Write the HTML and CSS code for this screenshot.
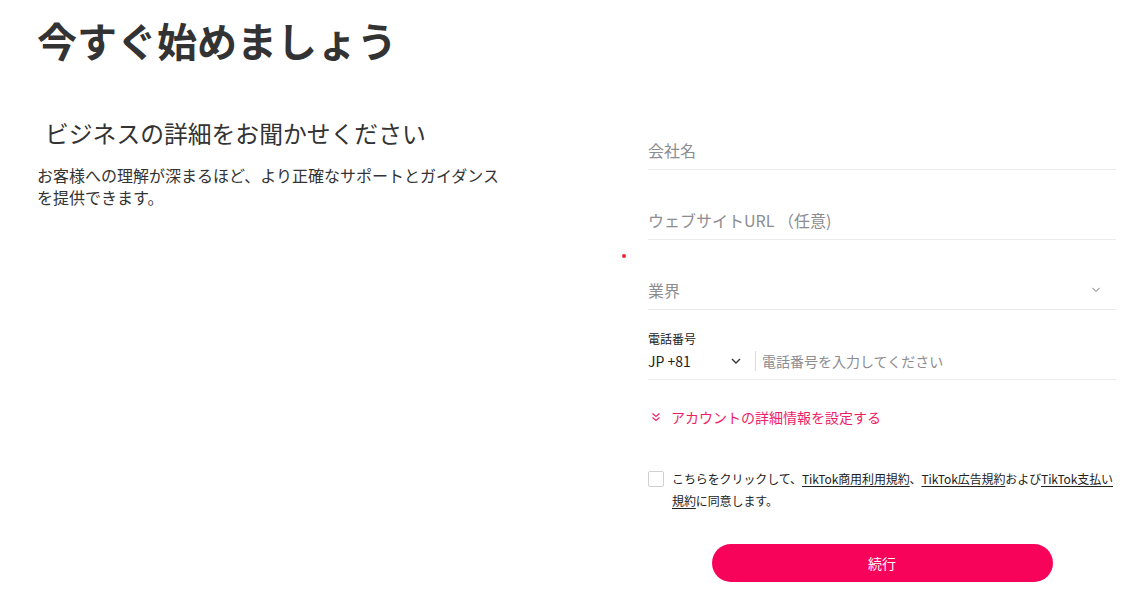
FILE: index.html
```html
<!DOCTYPE html>
<html lang="ja">
<head>
<meta charset="utf-8">
<title>今すぐ始めましょう</title>
<link rel="stylesheet" href="styles.css">
</head>
<body>
<div class="page">
  <h1 class="title">今すぐ始めましょう</h1>
  <div class="main">
    <section class="intro">
      <h2 class="intro-head">ビジネスの詳細をお聞かせください</h2>
      <p class="intro-text">お客様への理解が深まるほど、より正確なサポートとガイダンスを提供できます。</p>
    </section>
    <form class="form">
      <div class="field"><span class="placeholder">会社名</span></div>
      <div class="field"><span class="placeholder">ウェブサイトURL （任意)</span></div>
      <div class="field field-select">
        <span class="req-dot"></span>
        <span class="placeholder">業界</span>
        <svg class="sel-chev" width="10" height="6" viewBox="0 0 10 6"><path d="M1.5 1l3.5 3.5 3.5-3.5" fill="none" stroke="#a8a8ad" stroke-width="1.1"/></svg>
      </div>
      <div class="phone">
        <div class="phone-label">電話番号</div>
        <div class="phone-row">
          <div class="country">
            <span class="country-code">JP +81</span>
            <svg class="country-chev" width="10" height="6" viewBox="0 0 10 6"><path d="M1 1l4 4 4-4" fill="none" stroke="#333" stroke-width="1.4"/></svg>
          </div>
          <span class="phone-sep"></span>
          <span class="phone-ph">電話番号を入力してください</span>
        </div>
      </div>
      <div class="more">
        <svg class="more-icon" width="10" height="10" viewBox="0 0 10 10"><path d="M1.5 1.5l3.5 3 3.5-3M1.5 5.5l3.5 3 3.5-3" fill="none" stroke="#f0266b" stroke-width="1.3"/></svg>
        <span>アカウントの詳細情報を設定する</span>
      </div>
      <div class="agree">
        <span class="checkbox"></span>
        <p class="agree-text">こちらをクリックして、<a>TikTok商用利用規約</a>、<a>TikTok広告規約</a>および<a>TikTok支払い規約</a>に同意します。</p>
      </div>
      <div class="actions">
        <button type="button" class="btn">続行</button>
      </div>
    </form>
  </div>
</div>
</body>
</html>
```

FILE: styles.css
```css
* { box-sizing: border-box; }
html, body { margin: 0; padding: 0; background: #fff; }
body {
  font-family: "Noto Sans CJK JP", "Noto Sans", sans-serif;
  color: #333;
}
.page {
  padding: 0 28px 0 37px;
}
.title {
  margin: 12px 0 0;
  font-size: 40px;
  line-height: 56px;
  font-weight: 700;
  color: #333;
}
.main {
  display: flex;
  justify-content: space-between;
  margin-top: 48px;
}
.intro {
  width: 470px;
}
.intro-head {
  margin: 0;
  padding-left: 8px;
  font-size: 23.8px;
  line-height: 34px;
  font-weight: 400;
  color: #333;
}
.intro-text {
  margin: 14px 0 0;
  font-size: 16px;
  line-height: 22px;
  color: #333;
}
.form {
  width: 468px;
  padding-top: 14px;
  margin: 0;
}
.field {
  position: relative;
  display: flex;
  align-items: center;
  height: 40px;
  border-bottom: 1px solid #ebebeb;
  margin-bottom: 30px;
}
.placeholder {
  font-size: 16px;
  color: #8c8c91;
}
.field-select { margin-bottom: 20px; }
.sel-chev {
  margin-left: auto;
  margin-right: 15px;
}
.req-dot {
  position: absolute;
  left: -26px;
  top: -16px;
  width: 4px;
  height: 4px;
  border-radius: 50%;
  background: #f2262b;
}
.phone-label {
  font-size: 12px;
  line-height: 18px;
  color: #222;
}
.phone-row {
  display: flex;
  align-items: center;
  height: 32px;
  padding-bottom: 6px;
  border-bottom: 1px solid #ebebeb;
}
.country {
  display: flex;
  align-items: center;
  width: 100px;
}
.country-code {
  font-size: 14px;
  color: #222;
}
.country-chev { margin-left: auto; margin-right: 7px; }
.phone-sep {
  width: 1px;
  height: 20px;
  background: #dcdcdc;
  margin: 0 6px 0 7px;
}
.phone-ph {
  font-size: 14px;
  color: #8c8c91;
}
.more {
  display: flex;
  align-items: center;
  margin-top: 27px;
  font-size: 14px;
  line-height: 20px;
  color: #ee1d66;
}
.more-icon { margin: 0 10px 0 3px; }
.agree {
  display: flex;
  align-items: flex-start;
  margin-top: 41px;
}
.checkbox {
  flex: none;
  width: 16px;
  height: 16px;
  margin-top: 3px;
  border: 1px solid #d0d0d0;
  border-radius: 2px;
}
.agree-text {
  margin: 0 0 0 8px;
  font-size: 12px;
  line-height: 22px;
  letter-spacing: -0.1px;
  color: #222;
}
.agree-text a {
  color: #222;
  text-decoration: underline;
  text-underline-offset: 2px;
}
.actions {
  display: flex;
  justify-content: center;
  margin-top: 32px;
}
.btn {
  width: 341px;
  height: 38px;
  border: 0;
  border-radius: 19px;
  background: #f7045a;
  color: #fff;
  font-family: inherit;
  font-size: 14px;
}
```
